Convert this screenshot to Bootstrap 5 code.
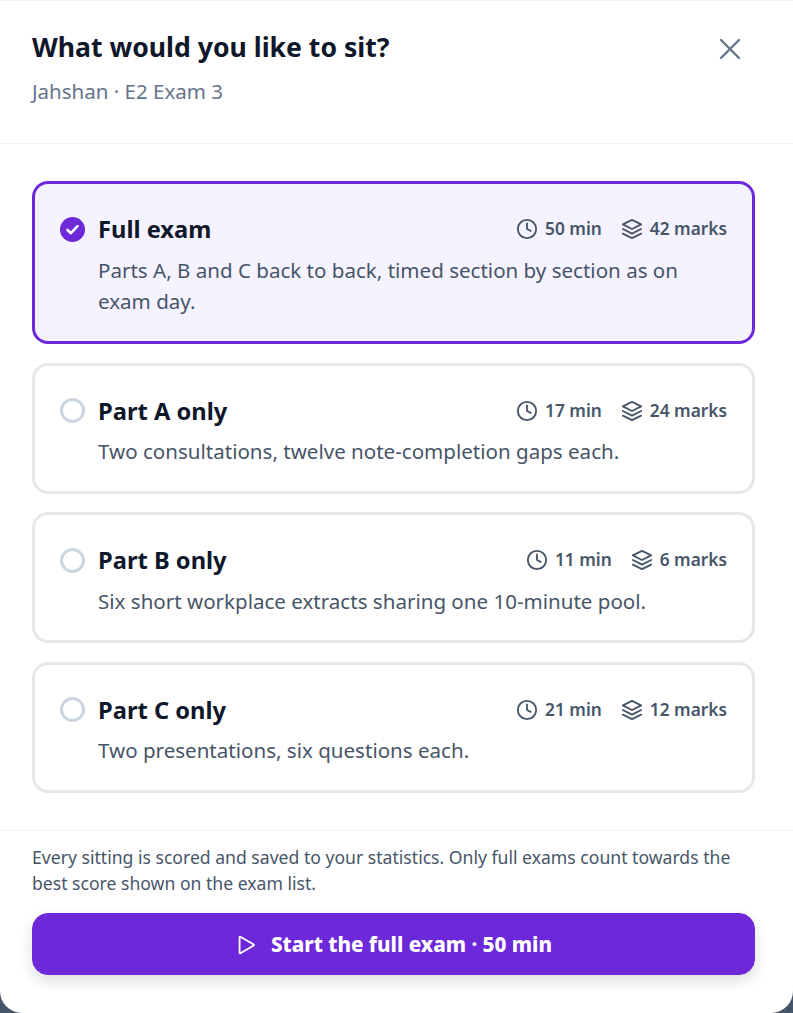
<!DOCTYPE html>
<html lang="en"><head><meta charset="utf-8"><title>Sit</title>
<link href="https://cdn.jsdelivr.net/npm/bootstrap@5.3.0/dist/css/bootstrap.min.css" rel="stylesheet">
<style>
html,body{height:100%;background:#475569;overflow:hidden}
body{font-family:"Noto Sans","Open Sans",sans-serif;color:#0f172a}
.sheet{width:793px;height:1013px;background:#fff;border-radius:0 0 22px 22px;border-top:1px solid #f3f4f6}
.sheet-head{height:143px;padding:27px 32px 0;border-bottom:1px solid #f1f2f4}
.sheet-title{font-size:26.6px;font-weight:700;line-height:38px;margin:0;color:#0f172a}
.sheet-sub{font-size:20.5px;line-height:28px;color:#64748b;margin-top:11px}
.close-x{margin:10px 20px 0 0;line-height:0;color:#64748b}
.opts{padding:37px 38px 0 32px;gap:18.6px}
.opt{border:3px solid #e5e7eb;border-radius:16px;padding:28px 25px 0;height:131px;background:#fff}
.opt.on{border-color:#6d28d9;background:#f5f3ff;height:163px}
.radio-off{width:25px;height:25px;border:3px solid #cbd5e1;border-radius:50%;flex:none}
.radio-on{width:25px;height:25px;flex:none;line-height:0}
.opt-lead{gap:13px}
.opt-name{font-size:23.7px;font-weight:700;line-height:34px;color:#0f172a}
.opt-meta{font-size:17.3px;font-weight:600;color:#475569;gap:19px}
.opt-meta svg{flex:none}
.opt-stat{gap:7px}
.opt-desc{font-size:20.55px;line-height:31px;color:#475569;margin:8.500px 0 0 38px}
.sheet-foot{margin-top:37px;border-top:1px solid #f1f2f4;padding:13px 38px 0 32px}
.foot-note{font-size:17.6px;line-height:26px;color:#475569;margin:0 0 17px}
.go-btn{height:62px;background:#6d28d9;border-color:#6d28d9;color:#fff;border-radius:16px;font-size:20.6px;font-weight:800;gap:14px;padding-top:8px;box-shadow:0 6px 14px rgba(15,23,42,.14)}
.go-btn:hover{background:#6d28d9;color:#fff}
</style></head><body>
<div class="sheet d-flex flex-column">
 <div class="sheet-head d-flex justify-content-between align-items-start">
  <div><h1 class="sheet-title">What would you like to sit?</h1><div class="sheet-sub">Jahshan · E2 Exam 3</div></div>
  <div class="close-x"><svg width="22" height="22" viewBox="0 0 22 22" fill="none" stroke="currentColor" stroke-width="2.4" stroke-linecap="round"><path d="M2 2l18 18M20 2L2 20"/></svg></div>
 </div>
 <div class="opts d-flex flex-column">
  <div class="opt on">
   <div class="d-flex align-items-center justify-content-between">
    <div class="opt-lead d-flex align-items-center"><span class="radio-on"><svg width="25" height="25" viewBox="0 0 25 25"><circle cx="12.500" cy="12.500" r="12.500" fill="#6d28d9"/><path d="M7.500 13l3.400 3.200 6.600-7" fill="none" stroke="#fff" stroke-width="2.600" stroke-linecap="round" stroke-linejoin="round"/></svg></span><span class="opt-name">Full exam</span></div>
    <div class="opt-meta d-flex align-items-center">
     <span class="opt-stat d-flex align-items-center"><svg width="22" height="22" viewBox="0 0 24 24" fill="none" stroke="currentColor" stroke-width="2" stroke-linecap="round" stroke-linejoin="round"><circle cx="12" cy="12" r="10"/><path d="M12 6v6l4 2"/></svg>50 min</span>
     <span class="opt-stat d-flex align-items-center"><svg width="22" height="22" viewBox="0 0 24 24" fill="none" stroke="currentColor" stroke-width="2" stroke-linecap="round" stroke-linejoin="round"><path d="M12 2 2 7l10 5 10-5-10-5Z"/><path d="m2 12 10 5 10-5"/><path d="m2 17 10 5 10-5"/></svg>42 marks</span>
    </div>
   </div>
   <p class="opt-desc">Parts A, B and C back to back, timed section by section as on exam day.</p>
  </div>
  <div class="opt">
   <div class="d-flex align-items-center justify-content-between">
    <div class="opt-lead d-flex align-items-center"><span class="radio-off"></span><span class="opt-name">Part A only</span></div>
    <div class="opt-meta d-flex align-items-center">
     <span class="opt-stat d-flex align-items-center"><svg width="22" height="22" viewBox="0 0 24 24" fill="none" stroke="currentColor" stroke-width="2" stroke-linecap="round" stroke-linejoin="round"><circle cx="12" cy="12" r="10"/><path d="M12 6v6l4 2"/></svg>17 min</span>
     <span class="opt-stat d-flex align-items-center"><svg width="22" height="22" viewBox="0 0 24 24" fill="none" stroke="currentColor" stroke-width="2" stroke-linecap="round" stroke-linejoin="round"><path d="M12 2 2 7l10 5 10-5-10-5Z"/><path d="m2 12 10 5 10-5"/><path d="m2 17 10 5 10-5"/></svg>24 marks</span>
    </div>
   </div>
   <p class="opt-desc">Two consultations, twelve note-completion gaps each.</p>
  </div>
  <div class="opt">
   <div class="d-flex align-items-center justify-content-between">
    <div class="opt-lead d-flex align-items-center"><span class="radio-off"></span><span class="opt-name">Part B only</span></div>
    <div class="opt-meta d-flex align-items-center">
     <span class="opt-stat d-flex align-items-center"><svg width="22" height="22" viewBox="0 0 24 24" fill="none" stroke="currentColor" stroke-width="2" stroke-linecap="round" stroke-linejoin="round"><circle cx="12" cy="12" r="10"/><path d="M12 6v6l4 2"/></svg>11 min</span>
     <span class="opt-stat d-flex align-items-center"><svg width="22" height="22" viewBox="0 0 24 24" fill="none" stroke="currentColor" stroke-width="2" stroke-linecap="round" stroke-linejoin="round"><path d="M12 2 2 7l10 5 10-5-10-5Z"/><path d="m2 12 10 5 10-5"/><path d="m2 17 10 5 10-5"/></svg>6 marks</span>
    </div>
   </div>
   <p class="opt-desc">Six short workplace extracts sharing one 10-minute pool.</p>
  </div>
  <div class="opt">
   <div class="d-flex align-items-center justify-content-between">
    <div class="opt-lead d-flex align-items-center"><span class="radio-off"></span><span class="opt-name">Part C only</span></div>
    <div class="opt-meta d-flex align-items-center">
     <span class="opt-stat d-flex align-items-center"><svg width="22" height="22" viewBox="0 0 24 24" fill="none" stroke="currentColor" stroke-width="2" stroke-linecap="round" stroke-linejoin="round"><circle cx="12" cy="12" r="10"/><path d="M12 6v6l4 2"/></svg>21 min</span>
     <span class="opt-stat d-flex align-items-center"><svg width="22" height="22" viewBox="0 0 24 24" fill="none" stroke="currentColor" stroke-width="2" stroke-linecap="round" stroke-linejoin="round"><path d="M12 2 2 7l10 5 10-5-10-5Z"/><path d="m2 12 10 5 10-5"/><path d="m2 17 10 5 10-5"/></svg>12 marks</span>
    </div>
   </div>
   <p class="opt-desc">Two presentations, six questions each.</p>
  </div>
 </div>
 <div class="sheet-foot">
  <p class="foot-note">Every sitting is scored and saved to your statistics. Only full exams count towards the best score shown on the exam list.</p>
  <button class="btn go-btn w-100 d-flex align-items-center justify-content-center"><svg width="22" height="22" viewBox="0 0 24 24" fill="none" stroke="#fff" stroke-width="2" stroke-linecap="round" stroke-linejoin="round"><path d="M5 3.500v17a.6.6 0 0 0 .9.5l14.500-8.500a.6.6 0 0 0 0-1L5.900 3a.6.6 0 0 0-.9.5Z"/></svg>Start the full exam · 50 min</button>
 </div>
</div>
</body></html>
